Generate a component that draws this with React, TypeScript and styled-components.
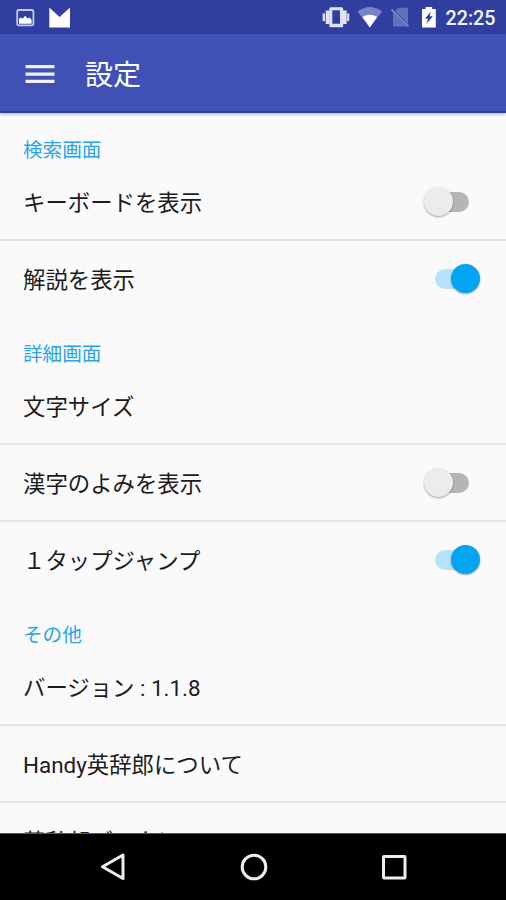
import React from "react";
import styled, { createGlobalStyle } from "styled-components";

const GlobalStyle = createGlobalStyle`
  * { box-sizing: border-box; }
  body { margin: 0; background: #fafafa; }
`;

const Screen = styled.div`
  width: 506px;
  height: 900px;
  display: flex;
  flex-direction: column;
  overflow: hidden;
  background: #fafafa;
  font-family: Roboto, "Noto Sans CJK JP", sans-serif;
`;

const StatusBar = styled.header`
  flex: none;
  height: 34px;
  padding: 0 10.5px 0 15px;
  display: flex;
  align-items: center;
  justify-content: space-between;
  background: #303f9f;
`;

const StatusIcons = styled.div`
  display: flex;
  align-items: center;
  height: 34px;
  svg { display: block; }
`;

const Clock = styled.span`
  margin-left: 8px;
  padding-top: 3px;
  color: #f4f5fb;
  font-size: 19.7px;
  font-weight: 500;
  line-height: 34px;
`;

const AppBar = styled.div`
  flex: none;
  height: 79px;
  padding: 2px 24px 0;
  display: flex;
  align-items: center;
  background: #3f51b5;
  border-bottom: 2px solid #2340a0;
  box-shadow: 0 1px 3px rgba(0, 0, 0, 0.3);
  z-index: 1;
`;

const MenuButton = styled.button`
  display: flex;
  padding: 0;
  border: 0;
  background: none;
`;

const Title = styled.h1`
  margin: 0 0 0 29px;
  padding-top: 4px;
  color: #fff;
  font-size: 28px;
  font-weight: 400;
  line-height: 40px;
`;

const Settings = styled.main`
  flex: 1;
  min-height: 0;
  overflow: hidden;
`;

const SectionTitle = styled.h2`
  height: 51.2px;
  margin: 0;
  padding: 23px 23px 0;
  color: #2ba3ea;
  font-size: 19.6px;
  font-weight: 400;
  line-height: 29.2px;
`;

const Row = styled.div<{ $last?: boolean }>`
  height: 76.6px;
  padding: 0 26px 0 23px;
  display: flex;
  align-items: center;
  justify-content: space-between;
  border-bottom: 2px solid ${(p) => (p.$last ? "transparent" : "#e4e4e4")};
`;

const Label = styled.span`
  padding-top: 3px;
  color: #1c1c1c;
  font-size: 22.4px;
  line-height: 32px;
  white-space: nowrap;
`;

const Track = styled.span<{ $on: boolean }>`
  width: 34px;
  height: 20px;
  margin: 1px 11.5px 0 0;
  display: flex;
  align-items: center;
  justify-content: ${(p) => (p.$on ? "flex-end" : "flex-start")};
  border-radius: 10px;
  background: ${(p) => (p.$on ? "#b4e3fb" : "#b5b5b5")};
`;

const Thumb = styled.span<{ $on: boolean }>`
  flex: none;
  width: 29px;
  height: 29px;
  margin: 0 -11px;
  border-radius: 50%;
  background: ${(p) => (p.$on ? "#03a4f2" : "#ececec")};
  box-shadow: 0 1px 2px rgba(0, 0, 0, 0.35);
`;

const NavBar = styled.nav`
  flex: none;
  height: 67px;
  padding-left: 1px;
  display: flex;
  justify-content: center;
  align-items: center;
  gap: 112.5px;
  background: #000;
  border-top: 1px solid #555;
  svg { display: block; }
`;

const Switch = ({ on }: { on: boolean }) => (
  <Track $on={on} role="switch" aria-checked={on}>
    <Thumb $on={on} />
  </Track>
);

type Item = { label: string; on?: boolean };

const sections: { title: string; items: Item[] }[] = [
  {
    title: "検索画面",
    items: [
      { label: "キーボードを表示", on: false },
      { label: "解説を表示", on: true },
    ],
  },
  {
    title: "詳細画面",
    items: [
      { label: "文字サイズ" },
      { label: "漢字のよみを表示", on: false },
      { label: "１タップジャンプ", on: true },
    ],
  },
  {
    title: "その他",
    items: [
      { label: "バージョン : 1.1.8" },
      { label: "Handy英辞郎について" },
      { label: "英辞郎データについて" },
    ],
  },
];

export default function App() {
  return (
    <Screen>
      <GlobalStyle />
      <StatusBar>
        <StatusIcons>
          <svg width="60" height="34" viewBox="0 0 60 34">
            <rect x="2.2" y="10" width="16.2" height="15.4" rx="1.5" fill="none" stroke="#c5caec" strokeWidth="1.8" />
            <path d="M4 23.8v-5l1.8-1.2 1.8 1.2 2.4-3 2.6 2.8 2-1.2 2 2.4v4z" fill="#fff" />
            <path d="M34.3 7.5 44.6 17 55 7.5V27.5H34.3z" fill="#fff" />
          </svg>
        </StatusIcons>
        <StatusIcons>
          <svg width="118" height="34" viewBox="320 0 118 34">
            <g fill="#dfe2f4">
              <path d="M329.3 8.7q0-1.5 1.5-1.5h10.9q1.5 0 1.5 1.5v17q0 1.5-1.5 1.5h-10.9q-1.5 0-1.5-1.5zM332.3 10.3v13.4h7.7V10.3z" fillRule="evenodd" />
              <rect x="325.7" y="10.5" width="4" height="13.5" />
              <rect x="322.6" y="13.5" width="2.4" height="7.5" />
              <rect x="342.7" y="10.5" width="4" height="13.5" />
              <rect x="347.1" y="13.5" width="2.2" height="7.5" />
            </g>
            <path d="M357.5 11.5q12.3-9 24.6 0L369.8 27.5z" fill="#7983c5" />
            <path d="M362.5 17q7.3-4.5 14.6 0l-7.3 10.5z" fill="#fff" />
            <path d="M393 12.3l14 14.2H393zM398.5 7.8H408V24L395 10.8z" fill="#6570ba" />
            <path d="M391.5 9.5l17 17" stroke="#7983c5" strokeWidth="1.8" />
            <path d="M422 9h3.6V7h6.6v2h3.6v18.5H422z" fill="#fff" />
            <path d="M430.8 11.5l-5.8 7.2h3l-1.6 5.3 6.4-7.8h-3.2z" fill="#303f9f" />
          </svg>
          <Clock>22:25</Clock>
        </StatusIcons>
      </StatusBar>
      <AppBar>
        <MenuButton aria-label="メニュー">
          <svg width="32" height="22" viewBox="0 0 32 22">
            <path d="M1.5 3.7h29M1.5 11.1h29M1.5 18.3h29" stroke="#eef0fa" strokeWidth="3.3" />
          </svg>
        </MenuButton>
        <Title>設定</Title>
      </AppBar>
      <Settings>
        {sections.map((section) => (
          <section key={section.title}>
            <SectionTitle>{section.title}</SectionTitle>
            {section.items.map((item, i) => (
              <Row key={item.label} $last={i === section.items.length - 1}>
                <Label>{item.label}</Label>
                {item.on !== undefined && <Switch on={item.on} />}
              </Row>
            ))}
          </section>
        ))}
      </Settings>
      <NavBar>
        <svg width="28" height="30" viewBox="0 0 28 30">
          <path d="M24 3v23.5L3.5 14.8z" fill="none" stroke="#eee" strokeWidth="3" strokeLinejoin="round" />
        </svg>
        <svg width="28" height="30" viewBox="0 0 28 30">
          <circle cx="14" cy="15" r="11.8" fill="none" stroke="#eee" strokeWidth="3" />
        </svg>
        <svg width="28" height="30" viewBox="0 0 28 30">
          <rect x="3.5" y="4.5" width="21.5" height="21.5" rx="0.5" fill="none" stroke="#eee" strokeWidth="3" />
        </svg>
      </NavBar>
    </Screen>
  );
}
